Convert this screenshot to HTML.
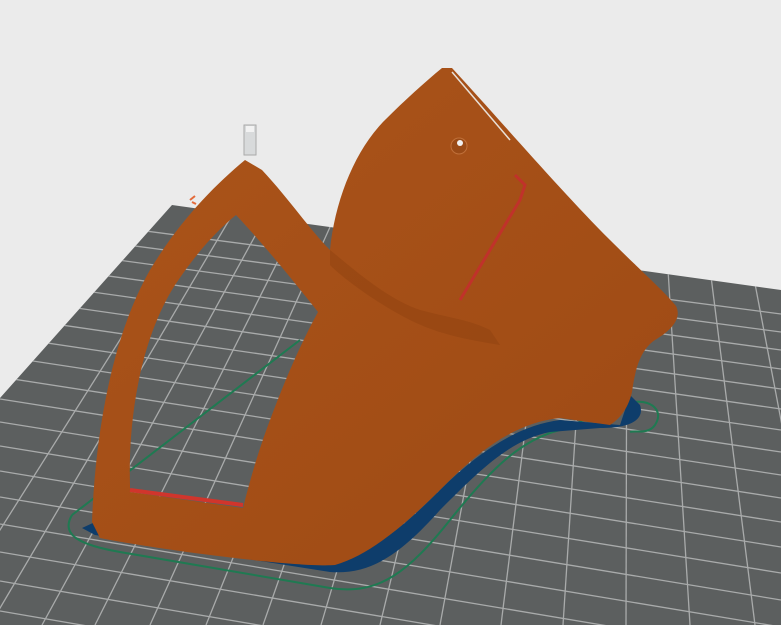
<!DOCTYPE html>
<html><head><style>html,body{margin:0;padding:0;background:#ebebeb;overflow:hidden;width:781px;height:625px}svg{display:block}</style></head>
<body>
<svg width="781" height="625" viewBox="0 0 781 625" xmlns="http://www.w3.org/2000/svg">
<defs>
<clipPath id="plate"><polygon points="172,205 781,290 781,625 0,625 0,398"/></clipPath>
<linearGradient id="og" x1="0" y1="0" x2="1" y2="1">
<stop offset="0" stop-color="#ab541a"/><stop offset="1" stop-color="#9e4a14"/></linearGradient>
</defs>
<rect width="781" height="625" fill="#ebebeb"/>
<polygon points="172,205 781,290 781,625 0,625 0,398" fill="#5c5f5f"/>
<g clip-path="url(#plate)" stroke="#a9abab" stroke-width="1.3">
<line x1="0" y1="212" x2="781" y2="314"/>
<line x1="0" y1="228" x2="781" y2="332"/>
<line x1="0" y1="244" x2="781" y2="350"/>
<line x1="0" y1="261" x2="781" y2="369"/>
<line x1="0" y1="279" x2="781" y2="389"/>
<line x1="0" y1="297" x2="781" y2="409"/>
<line x1="0" y1="316" x2="781" y2="430"/>
<line x1="0" y1="336" x2="781" y2="452"/>
<line x1="0" y1="356" x2="781" y2="475"/>
<line x1="0" y1="377" x2="781" y2="498"/>
<line x1="0" y1="399" x2="781" y2="522"/>
<line x1="0" y1="422" x2="781" y2="547"/>
<line x1="0" y1="446" x2="781" y2="573"/>
<line x1="0" y1="471" x2="781" y2="600"/>
<line x1="0" y1="497" x2="781" y2="627"/>
<line x1="0" y1="524" x2="781" y2="655"/>
<line x1="0" y1="552" x2="781" y2="684"/>
<line x1="0" y1="581" x2="781" y2="714"/>
<line x1="0" y1="611" x2="781" y2="745"/>
<line x1="205" y1="205" x2="-60" y2="625"/>
<line x1="238" y1="205" x2="-10" y2="625"/>
<line x1="272" y1="205" x2="42" y2="625"/>
<line x1="306" y1="205" x2="95" y2="625"/>
<line x1="340" y1="205" x2="150" y2="625"/>
<line x1="375" y1="205" x2="206" y2="625"/>
<line x1="410" y1="205" x2="263" y2="625"/>
<line x1="445" y1="205" x2="321" y2="625"/>
<line x1="481" y1="205" x2="380" y2="625"/>
<line x1="517" y1="205" x2="440" y2="625"/>
<line x1="553" y1="205" x2="501" y2="625"/>
<line x1="590" y1="205" x2="563" y2="625"/>
<line x1="627" y1="205" x2="626" y2="625"/>
<line x1="664" y1="205" x2="690" y2="625"/>
<line x1="702" y1="205" x2="755" y2="625"/>
<line x1="740" y1="205" x2="820" y2="625"/>
<line x1="778" y1="205" x2="885" y2="625"/>
</g>
<path d="M72,515 C60,535 80,545 120,552 L330,588 C380,596 410,570 450,520 C490,470 520,440 560,430 L620,405 C650,395 665,410 655,425 C648,435 635,430 630,432" fill="none" stroke="#1f7a52" stroke-width="2"/>
<path d="M72,515 L300,340" fill="none" stroke="#1f7a52" stroke-width="2"/>
<path d="M82,528 L95,535 L330,572 C370,575 400,555 440,510 C480,470 510,440 550,432 L600,428 C630,428 645,420 640,405 L630,395 L620,425 L560,420 C520,425 480,450 440,490 C400,530 370,555 330,560 L95,522 Z" fill="#0e3d6b"/>
<path fill-rule="evenodd" d="M92,522 C95,440 110,340 150,270 C180,220 215,185 245,160 L262,170 C290,200 310,230 330,250 C335,200 355,150 385,120 C405,100 425,82 442,68 L452,68 C500,120 560,190 610,240 C640,270 665,292 676,306 C682,318 672,330 655,340 C640,350 635,370 632,392 C628,410 618,420 610,425 L560,418 C520,422 485,445 445,485 C405,525 370,555 335,565 C300,568 160,550 100,538 Z M130,485 C128,420 140,340 175,285 C195,255 215,232 236,215 C255,235 285,270 318,312 C300,345 285,380 270,420 C258,452 250,480 243,508 L130,492 Z" fill="url(#og)"/>
<path d="M330,250 C360,275 390,300 420,310 C450,318 470,320 490,330 L500,345 C470,340 440,335 410,320 C380,305 345,280 330,265 Z" fill="#8f420f" opacity="0.5"/>
<path d="M460,300 L520,200 L525,185 L515,175" fill="none" stroke="#c0322a" stroke-width="3"/>
<path d="M130,490 L243,505" stroke="#d0352c" stroke-width="4"/>
<path d="M452,72 L510,140" stroke="#e8e0d8" stroke-width="1.5"/>
<circle cx="459" cy="146" r="8" fill="#9a4a16" stroke="#c0703a"/>
<circle cx="460" cy="143" r="3" fill="#f0f0f0"/>
<rect x="244" y="125" width="12" height="30" fill="#d8dadb" stroke="#aaa"/>
<rect x="246" y="126" width="8" height="6" fill="#f2f2f2"/>
<path d="M190,200 l5,-4 M192,202 l4,2" stroke="#e46a3a" stroke-width="2"/>
</svg>
</body></html>
